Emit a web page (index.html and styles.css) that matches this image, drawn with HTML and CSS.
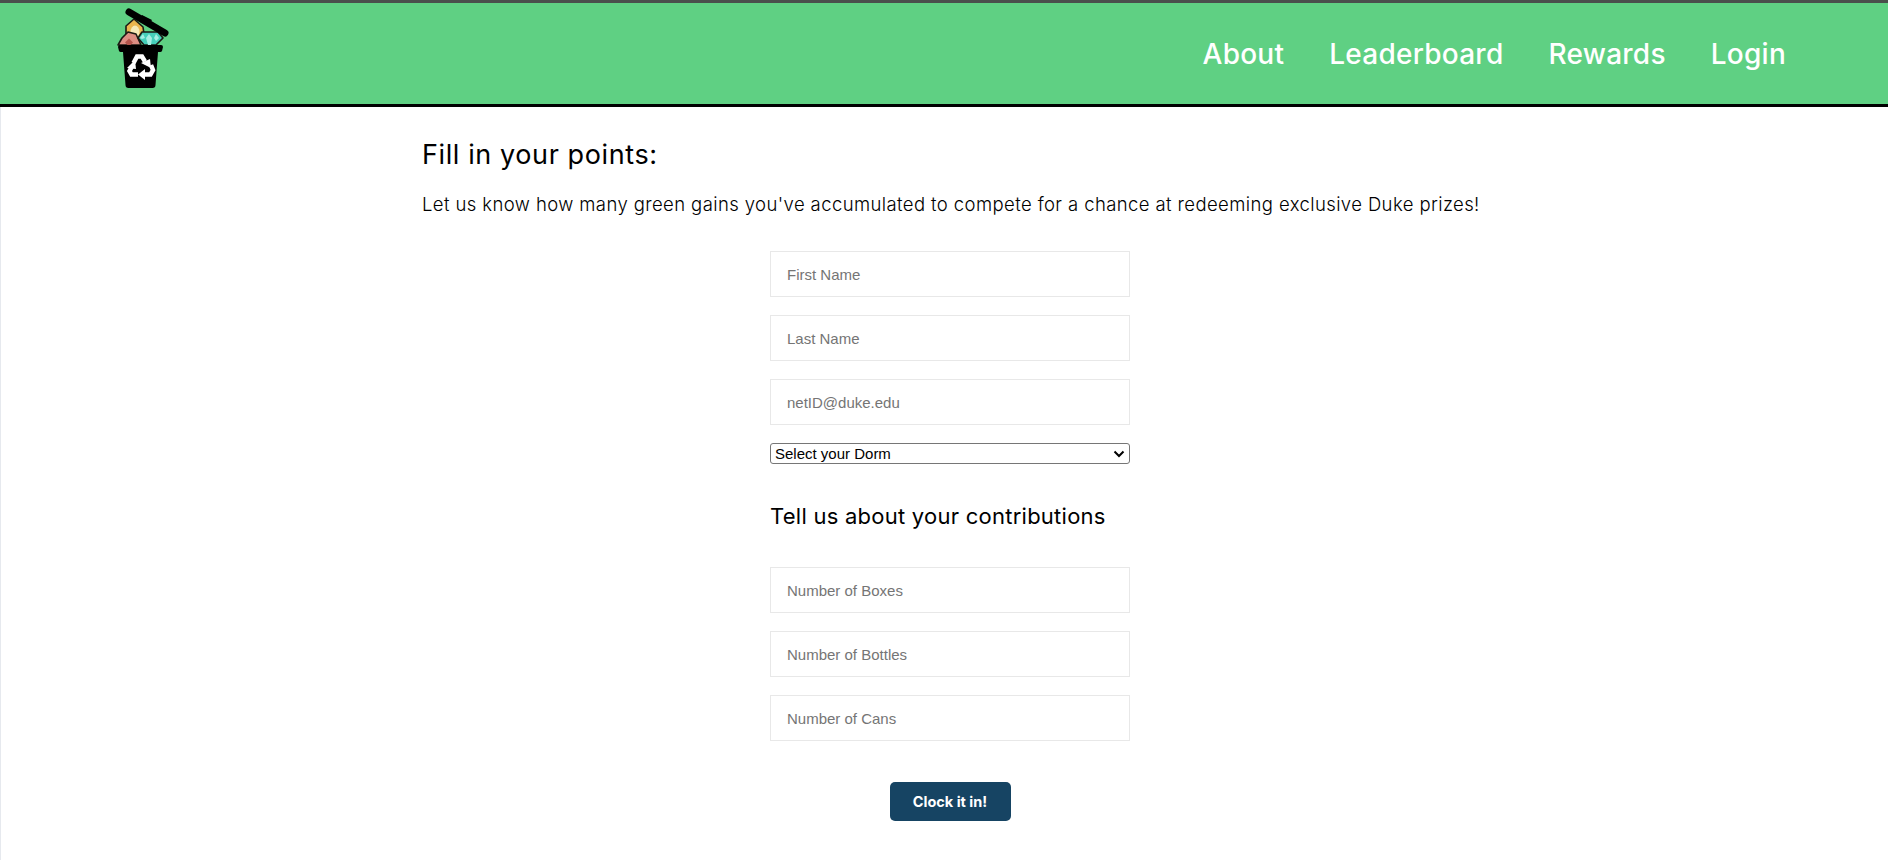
FILE: index.html
```html
<!DOCTYPE html>
<html lang="en">
<head>
<meta charset="utf-8">
<title>Fill in your points</title>
<link rel="stylesheet" href="styles.css">
</head>
<body>
<header class="topbar">
  <a class="logo" href="#" aria-label="Home">
    <svg width="60" height="88" viewBox="110 2 60 88">
      <!-- orange gem -->
      <path d="M134 19l9 8 1 7-9 11-9-11 0-8z" fill="#eab54e" stroke="#1c1a14" stroke-width="1.6" stroke-linejoin="round"/>
      <ellipse cx="135" cy="32" rx="4.5" ry="6.5" fill="#f6e9b8"/>
      <!-- pink gem -->
      <path d="M118 45l4-7 6-6 8 2 5 11z" fill="#dd8d83" stroke="#1c1a14" stroke-width="1.6" stroke-linejoin="round"/>
      <path d="M129 38.500l4 4-2.500 2.500h-3l-2.500-2.500z" fill="#b4544c"/>
      <!-- teal gem -->
      <path d="M142 32h16l5 6-7 7h-12l-6-7z" fill="#45cfba" stroke="#1c1a14" stroke-width="1.6" stroke-linejoin="round"/>
      <path d="M149 34l3 4-1 7h-3l-2-7zM156 34l3 4-3 3-2-3zM143 34l2 4-3 1-2-1z" fill="#a6efe3"/>
      <!-- lid -->
      <path d="M129 12l36 21" stroke="#000" stroke-width="7" stroke-linecap="round" fill="none"/>
      <path d="M142 15l10 5-3 5-10-5z" fill="#000"/>
      <!-- bin -->
      <path d="M120 45h41a2 2 0 0 1 2 2l-1 4a2 2 0 0 1-2 1h-2l-2.500 33a3 3 0 0 1-3 3h-24a3 3 0 0 1-3-3l-2.500-33h-2a2 2 0 0 1-2-1l-1-4a2 2 0 0 1 2-2z" fill="#000"/>
      <!-- recycle arrows -->
      <g fill="none" stroke="#fff" stroke-width="4.500">
        <path d="M133.500 63l3.500-6.500h5l3 5"/>
        <path d="M151 65l2 5-2.500 4.500h-6"/>
        <path d="M138 74.500h-6.500l-2-3.500 2.500-4.500"/>
      </g>
      <g fill="#fff">
        <path d="M141 63l9-4 1 9z"/>
        <path d="M145 69v11l-7-5.500z"/>
        <path d="M127 68l9 1-1-9z"/>
      </g>
    </svg>
  </a>
  <nav class="nav">
    <a href="#">About</a>
    <a href="#">Leaderboard</a>
    <a href="#">Rewards</a>
    <a href="#">Login</a>
  </nav>
</header>
<main class="page">
  <div class="content">
    <h1 class="title">Fill in your points:</h1>
    <p class="lead">Let us know how many green gains you've accumulated to compete for a chance at redeeming exclusive Duke prizes!</p>
    <form class="form">
      <input class="field" type="text" placeholder="First Name">
      <input class="field" type="text" placeholder="Last Name">
      <input class="field" type="text" placeholder="netID@duke.edu">
      <select class="dorm"><option>Select your Dorm</option></select>
      <h2 class="subtitle">Tell us about your contributions</h2>
      <input class="field" type="text" placeholder="Number of Boxes">
      <input class="field" type="text" placeholder="Number of Bottles">
      <input class="field" type="text" placeholder="Number of Cans">
      <button class="submit" type="button">Clock it in!</button>
    </form>
  </div>
</main>
</body>
</html>
```
FILE: styles.css
```css
* { box-sizing: border-box; }
html, body { margin: 0; height: 100%; overflow: hidden; }
body { background: #fff; color: #000; font-family: "Inter", "Liberation Sans", sans-serif; }

.topbar {
  height: 107px;
  display: flex;
  align-items: center;
  justify-content: space-between;
  background: #5fd083;
  border-top: 3px solid #4a4f4c;
  border-bottom: 3px solid #000;
  padding: 0 102px 0 110px;
}
.logo { display: block; align-self: flex-start; height: 88px; margin-top: -1px; }
.logo svg { display: block; }
.nav { display: flex; gap: 45px; padding-top: 1px; }
.nav a {
  color: #fff;
  text-decoration: none;
  font-size: 28px;
  font-weight: 500;
  letter-spacing: 0.25px;
}

.page {
  height: 753px;
  border-left: 1px solid #e6e9ee;
  padding-left: 421px;
}
.content { width: 1080px; padding-top: 32px; }
.title { margin: 0; font-size: 27px; line-height: 32px; font-weight: 400; letter-spacing: 0.6px; }
.lead { margin: 20px 0 0; font-size: 18.5px; line-height: 26px; font-weight: 300; letter-spacing: 0.4px; color: #000; }

.form { width: 360px; margin: 34px 0 0 348px; display: flex; flex-direction: column; }
.field {
  width: 360px;
  height: 46px;
  margin-bottom: 18px;
  padding: 0 16px;
  border: 1px solid #e8e8e8;
  font-family: "Liberation Sans", Arial, sans-serif;
  font-size: 15px;
  outline: none;
}
.field::placeholder { color: #757575; }
.dorm {
  appearance: none;
  width: 360px;
  height: 21px;
  padding: 0 0 0 4px;
  border: 1px solid #767676;
  border-radius: 3px;
  font-family: "Liberation Sans", Arial, sans-serif;
  font-size: 15px;
  color: #000;
  background: #fff url("data:image/svg+xml,%3Csvg xmlns='http://www.w3.org/2000/svg' width='12' height='8'%3E%3Cpath d='M1.500 1.500L6 6l4.500-4.500' fill='none' stroke='%23000' stroke-width='2'/%3E%3C/svg%3E") no-repeat right 4px center;
}
.subtitle { margin: 38px 0 37px; font-size: 22px; line-height: 28px; font-weight: 400; letter-spacing: 0.25px; }
.submit {
  align-self: center;
  width: 121px;
  height: 39px;
  margin-top: 23px;
  border: 0;
  border-radius: 5px;
  background: #164463;
  color: #fff;
  font-family: "Inter", sans-serif;
  font-size: 14.5px;
  font-weight: 700;
}
```
